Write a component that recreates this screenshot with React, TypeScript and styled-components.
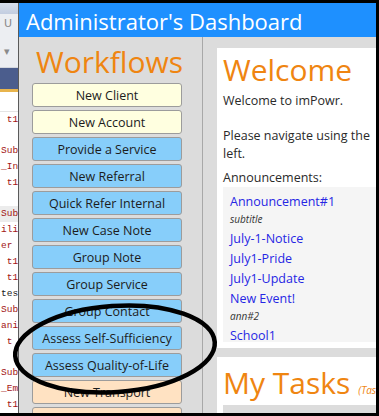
import React from 'react';
import styled, { createGlobalStyle } from 'styled-components';

const GlobalStyle = createGlobalStyle`
    html, body {
        margin: 0;
        padding: 0;
        background: #000;
    }
    * {
        box-sizing: border-box;
    }
`;

const Frame = styled.div`
    position: relative;
    width: 379px;
    height: 416px;
    display: flex;
    border-top: 3px solid #000;
    border-right: 3px solid #000;
    border-bottom: 3px solid #000;
    overflow: hidden;
    background: #fff;
    font-family: "Open Sans", "Noto Sans", sans-serif;
`;

/* the code editor peeking out behind the window */
const Editor = styled.div`
    width: 19px;
    flex-shrink: 0;
    display: flex;
    flex-direction: column;
    background: #fff;
    border-right: 1px solid #5a5a5a;
    overflow: hidden;
`;

const EditorCaption = styled.div`
    height: 12px;
    background: linear-gradient(#d6deec, #c3cde0);
`;

const EditorToolbar = styled.div`
    height: 57px;
    background: #eceef2;
    border-bottom: 1px solid #d2d6de;
    color: #8a8a8a;
    font-family: "DejaVu Sans", sans-serif;
    font-size: 11px;
    padding: 3px 0 0 4px;
    line-height: 14px;
`;

const EditorTabs = styled.div`
    height: 26px;
    background: #4b5d8d;
    border-bottom: 3px solid #e8b44c;
`;

const EditorGutter = styled.div`
    height: 21px;
    border-bottom: 1px solid #e4e4e4;
`;

const CodeLine = styled.div<{ $dark?: boolean; $shade?: boolean }>`
    height: 16px;
    line-height: 16px;
    white-space: pre;
    font-family: "Liberation Mono", "DejaVu Sans Mono", monospace;
    font-size: 9.5px;
    color: ${(p) => (p.$dark ? '#202020' : '#a31515')};
    background: ${(p) => (p.$shade ? '#ececec' : 'transparent')};
    padding-left: 1px;
`;

const Window = styled.div`
    flex: 1;
    display: flex;
    flex-direction: column;
    min-width: 0;
`;

const TitleBar = styled.div`
    height: 34px;
    flex-shrink: 0;
    background: #1e90ff;
    color: #fff;
    font-size: 22px;
    line-height: 34px;
    padding: 1px 0 0 7px;
    white-space: nowrap;
`;

const Body = styled.div`
    flex: 1;
    display: flex;
    background: #dcdcdc;
    min-height: 0;
`;

const Sidebar = styled.div`
    width: 184px;
    flex-shrink: 0;
    border-right: 1px solid #a8a8a8;
    display: flex;
    flex-direction: column;
    overflow: hidden;
`;

const Heading = styled.h1<{ $center?: boolean }>`
    margin: 0;
    font-weight: 400;
    font-size: 30px;
    line-height: 36px;
    color: #ef8511;
    text-align: ${(p) => (p.$center ? 'center' : 'left')};
    white-space: nowrap;
`;

const SideHeading = styled(Heading)`
    margin: 7px 0 3px;
    padding-right: 2px;
`;

const ButtonList = styled.div`
    display: flex;
    flex-direction: column;
    gap: 3px;
    padding-left: 13px;
`;

type Tone = 'yellow' | 'blue' | 'peach';

const tones: Record<Tone, string> = {
    yellow: '#ffffe0',
    blue: '#87cefa',
    peach: '#ffe2c2',
};

const FlowButton = styled.button<{ $tone: Tone }>`
    width: 150px;
    height: 24px;
    flex-shrink: 0;
    border: 1px solid #9c9c9c;
    border-radius: 3px;
    background: ${(p) => tones[p.$tone]};
    font-family: "Open Sans", "Noto Sans", sans-serif;
    font-size: 12.5px;
    color: #1c1c1c;
    padding: 0;
    text-align: center;
`;

const Content = styled.div`
    flex: 1;
    min-width: 0;
    display: flex;
    flex-direction: column;
    gap: 9px;
    padding: 11px 0 0 14px;
    overflow: hidden;
`;

const Panel = styled.div<{ $height?: number }>`
    background: #fff;
    flex-shrink: 0;
    height: ${(p) => (p.$height ? `${p.$height}px` : 'auto')};
    padding: 4px 0 0 6px;
    overflow: hidden;
`;

const Text = styled.p`
    margin: 0;
    font-size: 12.5px;
    line-height: 17.5px;
    color: #2a2a2a;
    white-space: nowrap;
`;

const Intro = styled(Text)`
    margin-top: 4px;
`;

const Gap = styled.div`
    height: 17.5px;
`;

const SubHead = styled(Text)`
    margin-top: 7px;
`;

const Announcements = styled.div`
    height: 155px;
    background: #f5f5f5;
    padding: 5px 0 0 7px;
    overflow: hidden;
`;

const AnnLink = styled.a`
    display: block;
    height: 20px;
    line-height: 20px;
    font-size: 12.5px;
    color: #2626e4;
    text-decoration: none;
    white-space: nowrap;
`;

const AnnSub = styled.div`
    height: 17px;
    line-height: 15px;
    font-size: 10px;
    font-style: italic;
    color: #333;
`;

const TaskHead = styled.div`
    display: flex;
    align-items: baseline;
    gap: 8px;
    margin-top: 4px;
    white-space: nowrap;
`;

const TaskNote = styled.span`
    font-size: 10px;
    font-style: italic;
    color: #ef8511;
`;

const TableHeader = styled.div`
    margin-top: 4px;
    height: 24px;
    background: #dcdcdc;
    padding: 4px 0 0 2px;
    font-size: 13px;
    font-weight: 700;
    color: #10106a;
`;

const Scribble = styled.svg`
    position: absolute;
    left: 0;
    top: -3px;
    pointer-events: none;
`;

const flows: { label: string; tone: Tone }[] = [
    { label: 'New Client', tone: 'yellow' },
    { label: 'New Account', tone: 'yellow' },
    { label: 'Provide a Service', tone: 'blue' },
    { label: 'New Referral', tone: 'blue' },
    { label: 'Quick Refer Internal', tone: 'blue' },
    { label: 'New Case Note', tone: 'blue' },
    { label: 'Group Note', tone: 'blue' },
    { label: 'Group Service', tone: 'blue' },
    { label: 'Group Contact', tone: 'blue' },
    { label: 'Assess Self-Sufficiency', tone: 'blue' },
    { label: 'Assess Quality-of-Life', tone: 'blue' },
    { label: 'New Transport', tone: 'peach' },
    { label: 'New Trip', tone: 'peach' },
];

const announcements: { title: string; sub?: string }[] = [
    { title: 'Announcement#1', sub: 'subtitle' },
    { title: 'July-1-Notice' },
    { title: 'July1-Pride' },
    { title: 'July1-Update' },
    { title: 'New Event!', sub: 'ann#2' },
    { title: 'School1' },
];

const code: { text: string; dark?: boolean; shade?: boolean }[] = [
    { text: ' t1' },
    { text: '' },
    { text: 'Sub' },
    { text: '_In' },
    { text: ' t1' },
    { text: '' },
    { text: 'Sub', shade: true },
    { text: 'ili' },
    { text: 'er' },
    { text: ' t1' },
    { text: ' t1' },
    { text: 'tes', dark: true },
    { text: 'Sub' },
    { text: 'ani' },
    { text: ' t' },
    { text: '' },
    { text: 'Sub' },
    { text: '_Em' },
    { text: ' t1' },
];

const App: React.FC = () => {
    return (
        <>
            <GlobalStyle />
            <Frame>
                <Editor>
                    <EditorCaption />
                    <EditorToolbar>
                        U
                        <br />
                        <br />
                        ▾
                    </EditorToolbar>
                    <EditorTabs />
                    <EditorGutter />
                    {code.map((line, i) => (
                        <CodeLine key={i} $dark={line.dark} $shade={line.shade}>
                            {line.text}
                        </CodeLine>
                    ))}
                </Editor>
                <Window>
                    <TitleBar>Administrator's Dashboard</TitleBar>
                    <Body>
                        <Sidebar>
                            <SideHeading $center>Workflows</SideHeading>
                            <ButtonList>
                                {flows.map((flow) => (
                                    <FlowButton key={flow.label} $tone={flow.tone}>
                                        {flow.label}
                                    </FlowButton>
                                ))}
                            </ButtonList>
                        </Sidebar>
                        <Content>
                            <Panel $height={300}>
                                <Heading>Welcome</Heading>
                                <Intro>Welcome to imPowr.</Intro>
                                <Gap />
                                <Text>Please navigate using the</Text>
                                <Text>left.</Text>
                                <SubHead>Announcements:</SubHead>
                                <Announcements>
                                    {announcements.map((a) => (
                                        <React.Fragment key={a.title}>
                                            <AnnLink href="#">{a.title}</AnnLink>
                                            {a.sub && <AnnSub>{a.sub}</AnnSub>}
                                        </React.Fragment>
                                    ))}
                                </Announcements>
                            </Panel>
                            <Panel>
                                <TaskHead>
                                    <Heading as="h2">My Tasks</Heading>
                                    <TaskNote>(Tasks assigned to me)</TaskNote>
                                </TaskHead>
                                <TableHeader>Title</TableHeader>
                            </Panel>
                        </Content>
                    </Body>
                </Window>
                <Scribble width="379" height="416" viewBox="0 0 379 416">
                    <ellipse
                        cx="115"
                        cy="349"
                        rx="100"
                        ry="43"
                        transform="rotate(-4 115 349)"
                        fill="none"
                        stroke="#000"
                        strokeWidth="4.5"
                    />
                </Scribble>
            </Frame>
        </>
    );
};

export default App;
